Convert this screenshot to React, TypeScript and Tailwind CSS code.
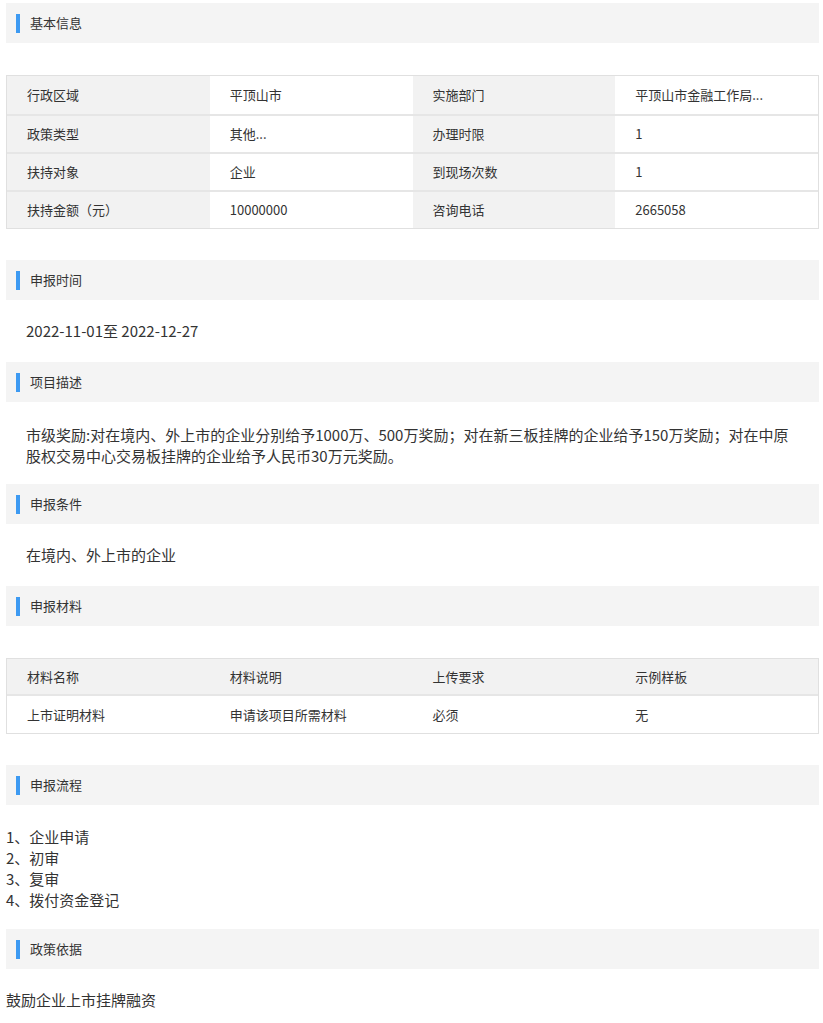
import React from "react";

const H = ({ t, cls = "" }: { t: string; cls?: string }) => (
  <div className={"h-[40px] bg-[#f4f4f4] flex items-center pl-[10px] " + cls}>
    <div className="w-[4px] h-[19px] bg-[#3d9af2]" />
    <span className="ml-[10px] text-[13px] text-[#333]">{t}</span>
  </div>
);

const rows = [
  ["行政区域", "平顶山市", "实施部门", "平顶山市金融工作局..."],
  ["政策类型", "其他...", "办理时限", "1"],
  ["扶持对象", "企业", "到现场次数", "1"],
  ["扶持金额（元）", "10000000", "咨询电话", "2665058"],
];

export default function App() {
  return (
    <div
      className="w-[823px] min-h-[1023px] bg-white text-[#333] pl-[6px] pt-[3px] pr-[4px]"
      style={{ fontFamily: '"Noto Sans CJK SC", "Noto Sans", sans-serif' }}
    >
      <H t="基本信息" />
      <div className="mt-[32px] border border-[#e0e0e0]">
        {rows.map((r, i) => (
          <div key={i} className={"grid grid-cols-4 h-[38px] text-[13px] " + (i ? "border-t-2 border-[#e6e6e6]" : "")}>
            {r.map((c, j) => (
              <div key={j} className={"flex items-center pl-[20px] " + (j % 2 === 0 ? "bg-[#f2f2f2]" : "bg-white")}>
                {c}
              </div>
            ))}
          </div>
        ))}
      </div>
      <H t="申报时间" cls="mt-[31px]" />
      <div className="h-[62px] flex items-center pl-[20px] text-[15px]">2022-11-01至 2022-12-27</div>
      <H t="项目描述" />
      <div className="pl-[20px] pr-[20px] pt-[22px] pb-[18px] text-[15px] leading-[21px]">
        市级奖励:对在境内、外上市的企业分别给予1000万、500万奖励；对在新三板挂牌的企业给予150万奖励；对在中原股权交易中心交易板挂牌的企业给予人民币30万元奖励。
      </div>
      <H t="申报条件" />
      <div className="h-[62px] flex items-center pl-[20px] text-[15px]">在境内、外上市的企业</div>
      <H t="申报材料" />
      <div className="mt-[32px] border border-[#e0e0e0] text-[13px]">
        <div className="grid grid-cols-4 h-[37px] bg-[#f2f2f2] border-b-2 border-[#e6e6e6]">
          {["材料名称", "材料说明", "上传要求", "示例样板"].map((c) => (
            <div key={c} className="flex items-center pl-[20px]">{c}</div>
          ))}
        </div>
        <div className="grid grid-cols-4 h-[37px]">
          {["上市证明材料", "申请该项目所需材料", "必须", "无"].map((c) => (
            <div key={c} className="flex items-center pl-[20px]">{c}</div>
          ))}
        </div>
      </div>
      <H t="申报流程" cls="mt-[31px]" />
      <div className="pt-[21px] pb-[19px] text-[15px] leading-[21px]">
        <div>1、企业申请</div>
        <div>2、初审</div>
        <div>3、复审</div>
        <div>4、拨付资金登记</div>
      </div>
      <H t="政策依据" />
      <div className="pt-[20px] text-[15px] leading-[21px]">鼓励企业上市挂牌融资</div>
    </div>
  );
}
